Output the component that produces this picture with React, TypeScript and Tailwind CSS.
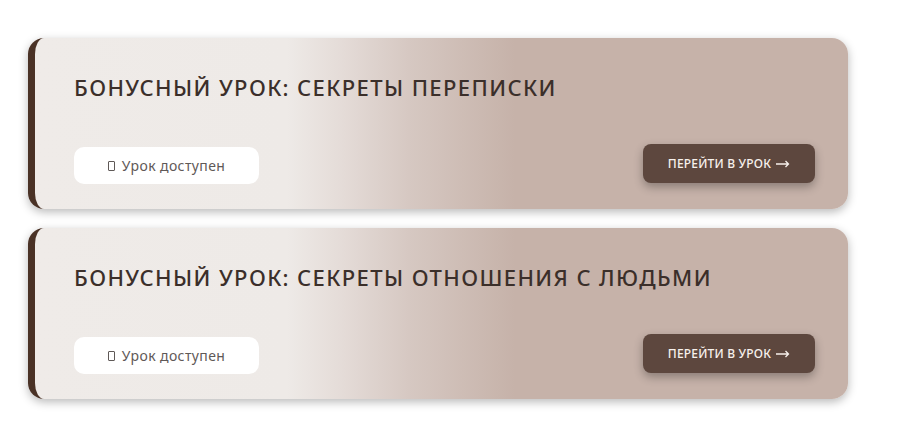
import React from "react";

const LESSONS = [
  "БОНУСНЫЙ УРОК: СЕКРЕТЫ ПЕРЕПИСКИ",
  "БОНУСНЫЙ УРОК: СЕКРЕТЫ ОТНОШЕНИЯ С ЛЮДЬМИ",
];

const LessonCard: React.FC<{ title: string }> = ({ title }) => (
  <div className="w-[820px] h-[171px] rounded-[16px] border-l-[7px] border-[#4a3226] bg-[linear-gradient(90deg,#efebe8_0%,#eeeae7_31%,#e4dbd7_38%,#d6c8c2_46%,#c6b2a9_59%,#c6b2a9_100%)] shadow-[0_3px_10px_rgba(0,0,0,0.28)] pl-[39px] pr-[33px] pt-[34px] pb-[25px] flex flex-col justify-between">
    <h2 className="text-[22px] leading-[30px] font-medium text-[#3b2f2a] tracking-[1.4px]">
      {title}
    </h2>
    <div className="flex items-end justify-between">
      <div className="w-[185px] h-[37px] bg-white rounded-[10px] flex items-center justify-center gap-[7px] text-[14px] tracking-[0.4px] text-[#5f5957]">
        <span className="inline-block w-[7px] h-[10px] border border-[#5f5957] rounded-[1px]" />
        <span>Урок доступен</span>
      </div>
      <button className="w-[172px] h-[39px] bg-[#5d473e] rounded-[8px] text-[#f7f1ec] text-[12px] font-medium tracking-[0.2px] shadow-[0_4px_10px_rgba(0,0,0,0.3)] mb-[1px] flex items-center justify-center gap-[5px]">
        <span>ПЕРЕЙТИ В УРОК</span>
        <svg width="14" height="8" viewBox="0 0 14 8" fill="none" stroke="currentColor" strokeWidth="1.3">
          <path d="M0 4h12.5M9.5 1l3 3-3 3" />
        </svg>
      </button>
    </div>
  </div>
);

export default function App() {
  return (
    <div
      className="w-[916px] h-[446px] bg-white pl-[28px] pt-[38px] flex flex-col gap-[19px]"
      style={{ fontFamily: "'Noto Sans', 'Open Sans', sans-serif" }}
    >
      {LESSONS.map((t) => (
        <LessonCard key={t} title={t} />
      ))}
    </div>
  );
}
